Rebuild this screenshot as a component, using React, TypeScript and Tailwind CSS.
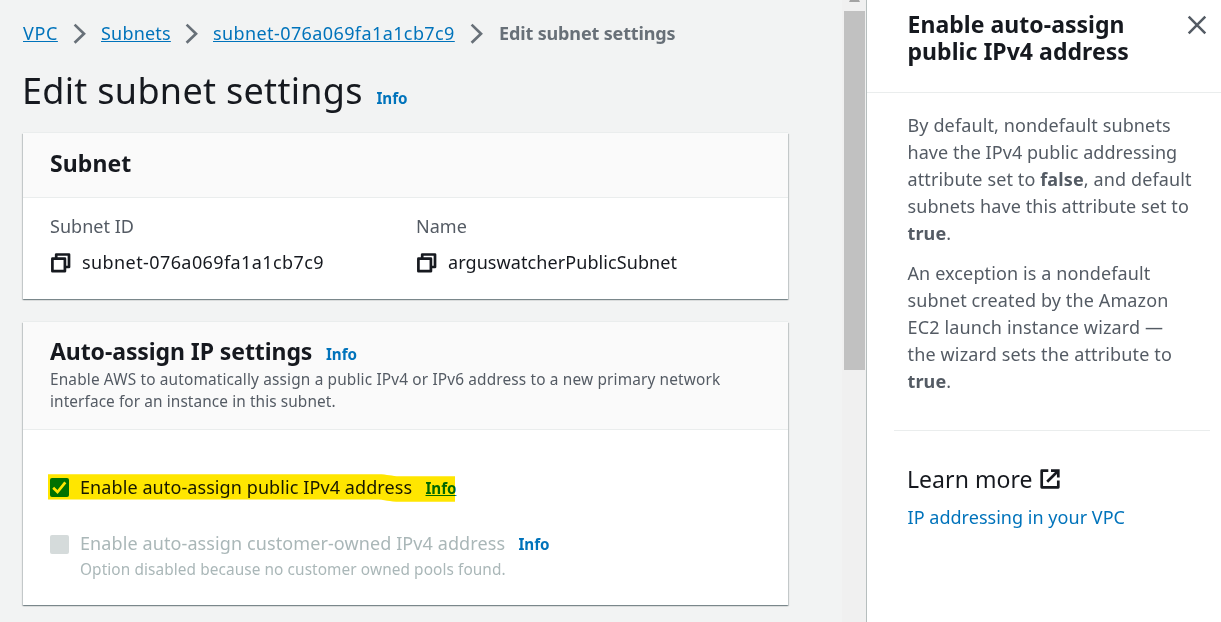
import type { ReactNode } from "react";

function Chevron() {
  return (
    <svg className="mt-[3px] h-[22px] w-[14px] shrink-0" viewBox="0 0 14 22" fill="none">
      <path d="M1.6 1.6L11 10.7L1.6 19.8" stroke="#687078" strokeWidth="2.7" />
    </svg>
  );
}

function CopyIcon() {
  return (
    <svg className="mr-[11px] h-[21px] w-[21px] shrink-0" viewBox="0 0 21 21" fill="none" stroke="#16191f" strokeWidth="2.7" strokeLinejoin="round">
      <path d="M6.2 6V2.5H19V15H15.5" />
      <path d="M2.4 6.7H14.9V19.2H2.4Z" />
    </svg>
  );
}

function ExternalIcon() {
  return (
    <svg className="ml-[7px] h-[20px] w-[20px] shrink-0" viewBox="0 0 20 20" fill="none" stroke="#16191f" strokeWidth="2.7">
      <path d="M8.3 1.7H1.7V18.3H18.3V11.5" strokeLinejoin="round" />
      <path d="M11 1.7H18.3V8.6M18 2L7.2 12.8" />
    </svg>
  );
}

function Info({ className }: { className: string }) {
  return (
    <a className={`text-[15.2px] font-bold tracking-[-0.05px] text-[#0073bb] ${className}`}>Info</a>
  );
}

function Field({ label, children }: { label: string; children: ReactNode }) {
  return (
    <div className="w-[366px] leading-[27px]">
      <div className="tracking-[0.02px] text-[#545b64]">{label}</div>
      <div className="mt-[9px] flex items-center">
        <CopyIcon />
        {children}
      </div>
    </div>
  );
}

const card =
  "w-[765px] bg-white shadow-[0_1px_1px_0_rgba(0,28,36,0.3),1px_1px_1px_0_rgba(0,28,36,0.15),-1px_1px_1px_0_rgba(0,28,36,0.15),0_-1px_0_0_#eaeded]";

export default function App() {
  return (
    <div className="flex h-[622px] w-[1221px] overflow-hidden bg-white font-['Noto_Sans',sans-serif] text-[18px] text-[#16191f]">
      <main className="w-[842px] shrink-0 bg-[#f2f3f3] pl-[23px]">
        <nav className="flex h-[47px] whitespace-nowrap pt-[20px] leading-[27px] text-[#0073bb]">
          <a className="w-[35px] tracking-[0.6px] underline decoration-1 underline-offset-1">VPC</a>
          <div className="w-[43px] pl-[15px]"><Chevron /></div>
          <a className="w-[69px] tracking-[0.2px] underline decoration-1 underline-offset-1">Subnets</a>
          <div className="w-[43px] pl-[15px]"><Chevron /></div>
          <a className="w-[242px] tracking-[0.4px] underline decoration-1 underline-offset-1">subnet-076a069fa1a1cb7c9</a>
          <div className="w-[44px] pl-[15px]"><Chevron /></div>
          <span className="font-bold tracking-[-0.14px] text-[#687078]">Edit subnet settings</span>
        </nav>
        <div className="mt-[21px] flex h-[46px] items-baseline whitespace-nowrap leading-[46px]">
          <h1 className="ml-[-1px] w-[354.5px] text-[36px] tracking-[0.3px]">Edit subnet settings</h1>
          <Info className="" />
        </div>

        <section className={`mt-[19px] h-[166px] ${card}`}>
          <header className="flex h-[65px] items-center border-b border-[#eaeded] bg-[#fafafa] pb-[3px] pl-[27px]">
            <h2 className="text-[23px] font-bold tracking-[0.1px]">Subnet</h2>
          </header>
          <div className="flex pl-[27px] pt-[15px]">
            <Field label="Subnet ID"><span className="tracking-[0.41px]">subnet-076a069fa1a1cb7c9</span></Field>
            <Field label="Name"><span className="tracking-[0.08px]">arguswatcherPublicSubnet</span></Field>
          </div>
        </section>

        <section className={`mt-[23px] h-[283px] ${card}`}>
          <header className="h-[108px] border-b border-[#eaeded] bg-[#fafafa] pl-[27px] pt-[14px]">
            <div className="flex h-[33px] items-baseline leading-[30px]">
              <h2 className="w-[276px] text-[23px] font-bold tracking-[-0.08px]">Auto-assign IP settings</h2>
              <Info className="" />
            </div>
            <p className="whitespace-nowrap text-[15.4px] leading-[22px] tracking-[0.15px] text-[#545b64]">
              Enable AWS to automatically assign a public IPv4 or IPv6 address to a new primary network
              <br />
              <span className="tracking-[0.09px]">interface for an instance in this subnet.</span>
            </p>
          </header>
          <div className="pl-[27px] pt-[44px]">
            <div className="relative flex h-[27px] items-center leading-[27px]">
              <svg className="h-[19px] w-[19px]" viewBox="0 0 19 19">
                <rect width="19" height="19" rx="2" fill="#007dbc" />
                <path d="M3.2 9.8L7.5 14L15.3 4.4" fill="none" stroke="#fff" strokeWidth="2.7" />
              </svg>
              <div className="flex items-baseline pl-[11px]">
                <span className="w-[345.5px] whitespace-nowrap tracking-[0.09px]">Enable auto-assign public IPv4 address</span>
                <Info className="underline decoration-1 underline-offset-1" />
              </div>
              <svg className="absolute left-[-2px] top-0 h-[28px] w-[407px] mix-blend-multiply" viewBox="0 0 407 28">
                <path d="M0 0.3H330C340 0.3 343 2.3 352 2.3H407V27.8H352C341 27.8 337 25.5 327 25.5H0Z" fill="#ffe600" />
              </svg>
            </div>
            <div className="mt-[29px] flex h-[27px] items-center leading-[27px]">
              <div className="mt-px h-[19px] w-[19px] rounded-[2px] bg-[#d5dbdb]" />
              <div className="flex items-baseline pl-[11px]">
                <span className="w-[438.5px] whitespace-nowrap tracking-[0.1px] text-[#aab7b8]">Enable auto-assign customer-owned IPv4 address</span>
                <Info className="" />
              </div>
            </div>
            <p className="mt-[2px] pl-[30px] text-[15.4px] leading-[22px] tracking-[0.08px] text-[#aab7b8]">
              Option disabled because no customer owned pools found.
            </p>
          </div>
        </section>
      </main>

      <div className="flex w-[24px] shrink-0 flex-col items-end bg-[#f0f0f0] pr-px">
        <svg className="h-[11px] w-[21px]" viewBox="0 0 21 11">
          <path d="M6 0H15L16 2H5Z" fill="#a3a3a3" />
        </svg>
        <div className="h-[359px] w-[21px] bg-[#c1c1c1]" />
      </div>

      <aside className="w-[355px] shrink-0 border-l border-[#b6bebe] bg-white">
        <header className="flex h-[93px] justify-between border-b border-[#eaeded] pl-[40.5px] pr-[14px] pt-[11px]">
          <h2 className="whitespace-nowrap text-[23px] font-bold leading-[27px] tracking-[0.04px]">
            Enable auto-assign
            <br />
            public IPv4 address
          </h2>
          <svg className="mt-[4px] h-[20px] w-[20px]" viewBox="0 0 20 20">
            <path d="M1.7 1.7L18.3 18.3M18.3 1.7L1.7 18.3" stroke="#545b64" strokeWidth="2.5" />
          </svg>
        </header>
        <div className="whitespace-nowrap pl-[40.5px] pt-[19px] leading-[27px] tracking-[0.12px] text-[#545b64]">
          <p>
            By default, nondefault subnets
            <br />
            <span className="tracking-[0.05px]">have the IPv4 public addressing</span>
            <br />
            attribute set to <b>false</b>, and default
            <br />
            <span className="tracking-[0.08px]">subnets have this attribute set to</span>
            <br />
            <b>true</b>.
          </p>
          <p className="mt-[13px]">
            An exception is a nondefault
            <br />
            subnet created by the Amazon
            <br />
            <span className="tracking-[0.15px]">EC2 launch instance wizard —</span>
            <br />
            <span className="tracking-[0.15px]">the wizard sets the attribute to</span>
            <br />
            <b>true</b>.
          </p>
        </div>
        <hr className="ml-[27px] mt-[35px] w-[316px] border-[#eaeded]" />
        <div className="pl-[40.5px] pt-[33px]">
          <h3 className="flex h-[30px] items-center text-[23px] leading-[30px] tracking-[0.05px]">
            <span className="ml-[-0.5px]">Learn more</span>
            <ExternalIcon />
          </h3>
          <a className="mt-[10px] block leading-[27px] tracking-[0.03px] text-[#0073bb]">IP addressing in your VPC</a>
        </div>
      </aside>
    </div>
  );
}
